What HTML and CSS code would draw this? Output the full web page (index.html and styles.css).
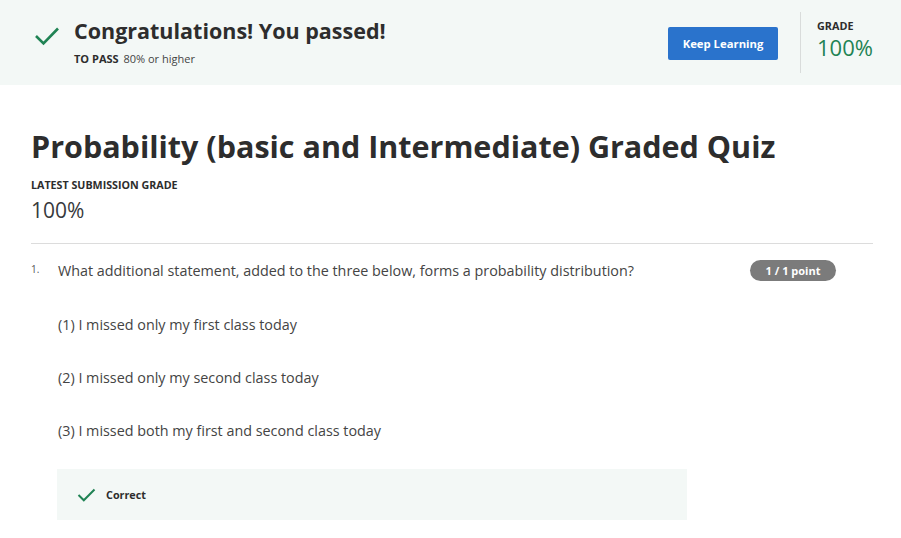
FILE: index.html
```html
<!DOCTYPE html>
<html>
<head>
<meta charset="utf-8">
<link rel="stylesheet" href="styles.css">
</head>
<body>
<header class="banner">
  <div class="banner-left">
    <svg class="check-big" width="26" height="20" viewBox="0 0 26 20"><path d="M2 10 L9.5 17.5 L24 2.5" fill="none" stroke="#1f8354" stroke-width="2.6"/></svg>
    <div class="banner-text">
      <div class="congrats">Congratulations! You passed!</div>
      <div class="topass"><b>TO PASS</b> 80% or higher</div>
    </div>
  </div>
  <div class="banner-right">
    <button class="keep">Keep Learning</button>
    <div class="divider"></div>
    <div class="grade">
      <div class="grade-label">GRADE</div>
      <div class="grade-value">100%</div>
    </div>
  </div>
</header>
<main class="content">
  <h1 class="quiz-title">Probability (basic and Intermediate) Graded Quiz</h1>
  <div class="latest-label">LATEST SUBMISSION GRADE</div>
  <div class="latest-value">100%</div>
  <hr class="rule">
  <div class="question">
    <div class="qnum">1.</div>
    <div class="qbody">
      <div class="qhead">
        <div class="qtext">What additional statement, added to the three below, forms a probability distribution?</div>
        <div class="badge">1 / 1 point</div>
      </div>
      <p class="opt">(1) I missed only my first class today</p>
      <p class="opt">(2) I missed only my second class today</p>
      <p class="opt">(3) I missed both my first and second class today</p>
      <div class="correct">
        <svg width="19" height="14" viewBox="0 0 19 14"><path d="M1.5 7 L6.8 12.3 L17.5 1.5" fill="none" stroke="#1f8354" stroke-width="2"/></svg>
        <span>Correct</span>
      </div>
    </div>
  </div>
</main>
</body>
</html>
```
FILE: styles.css
```css
* { box-sizing: border-box; }
body {
  margin: 0;
  font-family: "Open Sans", sans-serif;
  color: #373a3c;
  background: #fff;
}
.banner {
  height: 85px;
  background: #f3f8f6;
  display: flex;
  justify-content: space-between;
  align-items: center;
  padding: 0 28px 0 34px;
}
.banner-left { display: flex; align-items: flex-start; margin-bottom: 3px; }
.check-big { margin-top: 10px; margin-right: 14px; }
.congrats {
  font-size: 21.5px;
  font-weight: 700;
  color: #2d2d2d;
  line-height: 30px;
}
.topass {
  font-size: 11px;
  line-height: 15px;
  color: #444;
  margin-top: 5px;
}
.topass b { font-weight: 700; margin-right: 2px; color: #2d2d2d; }
.banner-right { display: flex; align-items: center; height: 100%; }
.keep {
  width: 110px;
  height: 33px;
  background: #2a73cc;
  color: #fff;
  border: none;
  border-radius: 2px;
  font-family: "Open Sans", sans-serif;
  font-weight: 700;
  font-size: 11.3px;
  margin-right: 22px;
  margin-left: 1px;
  margin-top: 2px;
}
.divider {
  width: 1px;
  height: 61px;
  background: #d9dcdb;
  margin-right: 16px;
}
.grade { width: 56px; margin-bottom: 6px; }
.grade-label {
  font-size: 10.8px;
  font-weight: 700;
  color: #2d2d2d;
  line-height: 14px;
}
.grade-value {
  font-size: 22px;
  color: #1f8354;
  line-height: 28px;
}
.content { padding: 0 28px 0 31px; }
.quiz-title {
  margin: 41px 0 0 0;
  font-size: 30.5px;
  font-weight: 700;
  color: #2d2d2d;
  line-height: 40px;
}
.latest-label {
  margin-top: 12px;
  font-size: 10.7px;
  font-weight: 700;
  color: #2d2d2d;
  line-height: 14px;
}
.latest-value {
  font-size: 21px;
  line-height: 28px;
  margin-top: 4px;
  color: #373a3c;
}
.rule {
  border: none;
  border-top: 1px solid #dcdcdc;
  margin: 19px 0 0 0;
}
.question { display: flex; margin-top: 16px; }
.qnum { width: 27px; font-size: 10px; color: #555; padding-top: 2px; }
.qbody { flex: 1; }
.qhead { display: flex; justify-content: space-between; align-items: flex-start; }
.qtext { font-size: 14.35px; line-height: 22px; color: #444; }
.badge {
  margin-top: 0;
  margin-right: 37px;
  width: 86px;
  height: 21px;
  border-radius: 11px;
  background: #7b7b7b;
  color: #fff;
  font-size: 11px;
  font-weight: 700;
  text-align: center;
  line-height: 21px;
}
.opt {
  margin: 31px 0 0 0;
  font-size: 14.35px;
  line-height: 22px;
  color: #444;
}
.opt:first-of-type { margin-top: 32px; }
.correct {
  margin-top: 27px;
  margin-left: -1px;
  width: 630px;
  height: 51px;
  background: #f3f8f6;
  display: flex;
  align-items: center;
  padding-left: 20px;
}
.correct svg { margin-right: 10px; }
.correct span { font-size: 10.8px; font-weight: 700; color: #2d2d2d; }
```
